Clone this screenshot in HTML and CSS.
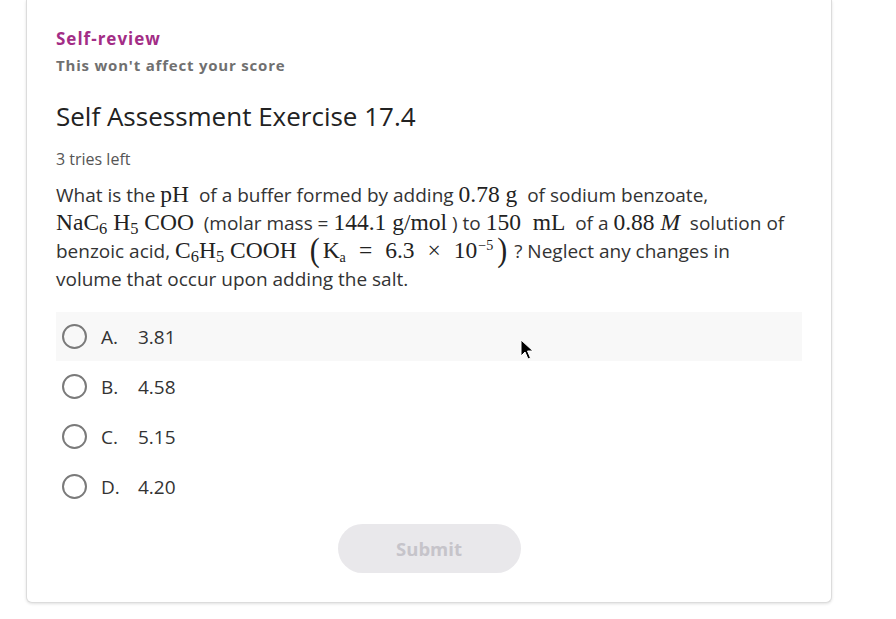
FILE: index.html
```html
<!DOCTYPE html>
<html>
<head>
<meta charset="utf-8">
<link rel="stylesheet" href="styles.css">
</head>
<body>
<div class="page">
  <div class="card">
    <div class="kicker">Self-review</div>
    <div class="note">This won't affect your score</div>
    <h1 class="title">Self Assessment Exercise 17.4</h1>
    <div class="tries">3 tries left</div>
    <p class="question">What is the <span class="m">pH</span>&nbsp; of a buffer formed by adding <span class="m">0.78 g</span>&nbsp; of sodium benzoate,<br><span class="m">NaC<sub>6</sub> H<sub>5</sub> COO</span>&nbsp; (molar mass = <span class="m">144.1 g/mol</span> ) to <span class="m">150 &nbsp;mL</span>&nbsp; of a <span class="m">0.88 <i>M</i></span>&nbsp; solution of<br>benzoic acid, <span class="m">C<sub>6</sub>H<sub>5</sub> COOH<span class="gap"></span><span class="paren">(</span>K<sub class="a">a</sub><span class="op">=</span>6.3<span class="op">×</span>10<sup>−5</sup><span class="paren close">)</span></span> ? Neglect any changes in<br>volume that occur upon adding the salt.</p>
    <div class="options">
      <div class="option hover"><span class="radio"></span><span class="letter">A.</span><span class="value">3.81</span></div>
      <div class="option"><span class="radio"></span><span class="letter">B.</span><span class="value">4.58</span></div>
      <div class="option"><span class="radio"></span><span class="letter">C.</span><span class="value">5.15</span></div>
      <div class="option"><span class="radio"></span><span class="letter">D.</span><span class="value">4.20</span></div>
    </div>
    <div class="actions"><button class="submit" disabled>Submit</button></div>
  </div>
</div>
<svg class="cursor" width="14" height="22" viewBox="0 0 14 22"><path d="M1 1 L1 17 L5 13 L8 20 L10.5 19 L7.5 12 L13 12 Z" fill="#000" stroke="#fff" stroke-width="1"/></svg>
</body>
</html>
```
FILE: styles.css
```css
html, body {
  margin: 0;
  padding: 0;
  background: #ffffff;
}
body {
  font-family: "Open Sans", "Liberation Sans", sans-serif;
  color: #333;
  position: relative;
  width: 896px;
  height: 619px;
  overflow: hidden;
}
.page {
  padding-left: 26px;
}
.card {
  width: 746px;
  background: #fff;
  border: 1px solid #dcdcdc;
  border-top: none;
  border-radius: 0 0 6px 6px;
  box-shadow: 0 1px 3px rgba(0,0,0,0.12);
  padding: 28px 29px 29px 29px;
}
.kicker {
  font-size: 17px;
  line-height: 22px;
  font-weight: 700;
  color: #a32d86;
  letter-spacing: 1px;
}
.note {
  margin-top: 5px;
  font-size: 15px;
  line-height: 20px;
  font-weight: 700;
  color: #707070;
  letter-spacing: 0.8px;
}
.title {
  margin: 24px 0 0;
  font-size: 26px;
  line-height: 34px;
  font-weight: 400;
  color: #222;
}
.tries {
  margin-top: 16px;
  font-size: 16px;
  line-height: 20px;
  color: #555;
}
.question {
  margin: 12px 0 0;
  font-size: 19px;
  line-height: 28px;
  color: #333;
}
.m {
  font-family: "Liberation Serif", "Times New Roman", serif;
  font-size: 23.5px;
  line-height: 0;
  color: #222;
}
.m i { font-style: italic; }
sub, sup {
  font-size: 0.7em;
  line-height: 0;
}
sub { vertical-align: -0.25em; }
sub.a { font-size: 0.6em; }
sup { vertical-align: 0.6em; font-size: 0.6em; margin-left: 1px; }
.gap {
  display: inline-block;
  width: 12px;
}
.op {
  display: inline-block;
  margin: 0 13px;
}
.paren {
  display: inline-block;
  font-size: 30px;
  line-height: 0;
  vertical-align: -1px;
  margin: 0 3px 0 1px;
  transform: scaleY(1.15);
}
.paren.close {
  margin: 0 2px 0 4px;
}
.options {
  margin-top: 19px;
  display: flex;
  flex-direction: column;
}
.option {
  height: 49px;
  margin-bottom: 1px;
  display: flex;
  align-items: center;
  font-size: 19px;
  color: #333;
}
.option.hover {
  background: #f8f8f8;
}
.radio {
  width: 21px;
  height: 21px;
  border: 2px solid #7a7a7a;
  border-radius: 50%;
  margin-left: 6px;
  flex: none;
}
.letter {
  margin-left: 14px;
  width: 37px;
}
.actions {
  margin-top: 12px;
  display: flex;
  justify-content: center;
}
.submit {
  width: 183px;
  height: 49px;
  border: none;
  border-radius: 25px;
  background: #e9e8eb;
  color: #c6c4ca;
  font-family: "Open Sans", "Liberation Sans", sans-serif;
  font-size: 18.5px;
  font-weight: 700;
}
.cursor {
  position: absolute;
  left: 520px;
  top: 339px;
}
```
